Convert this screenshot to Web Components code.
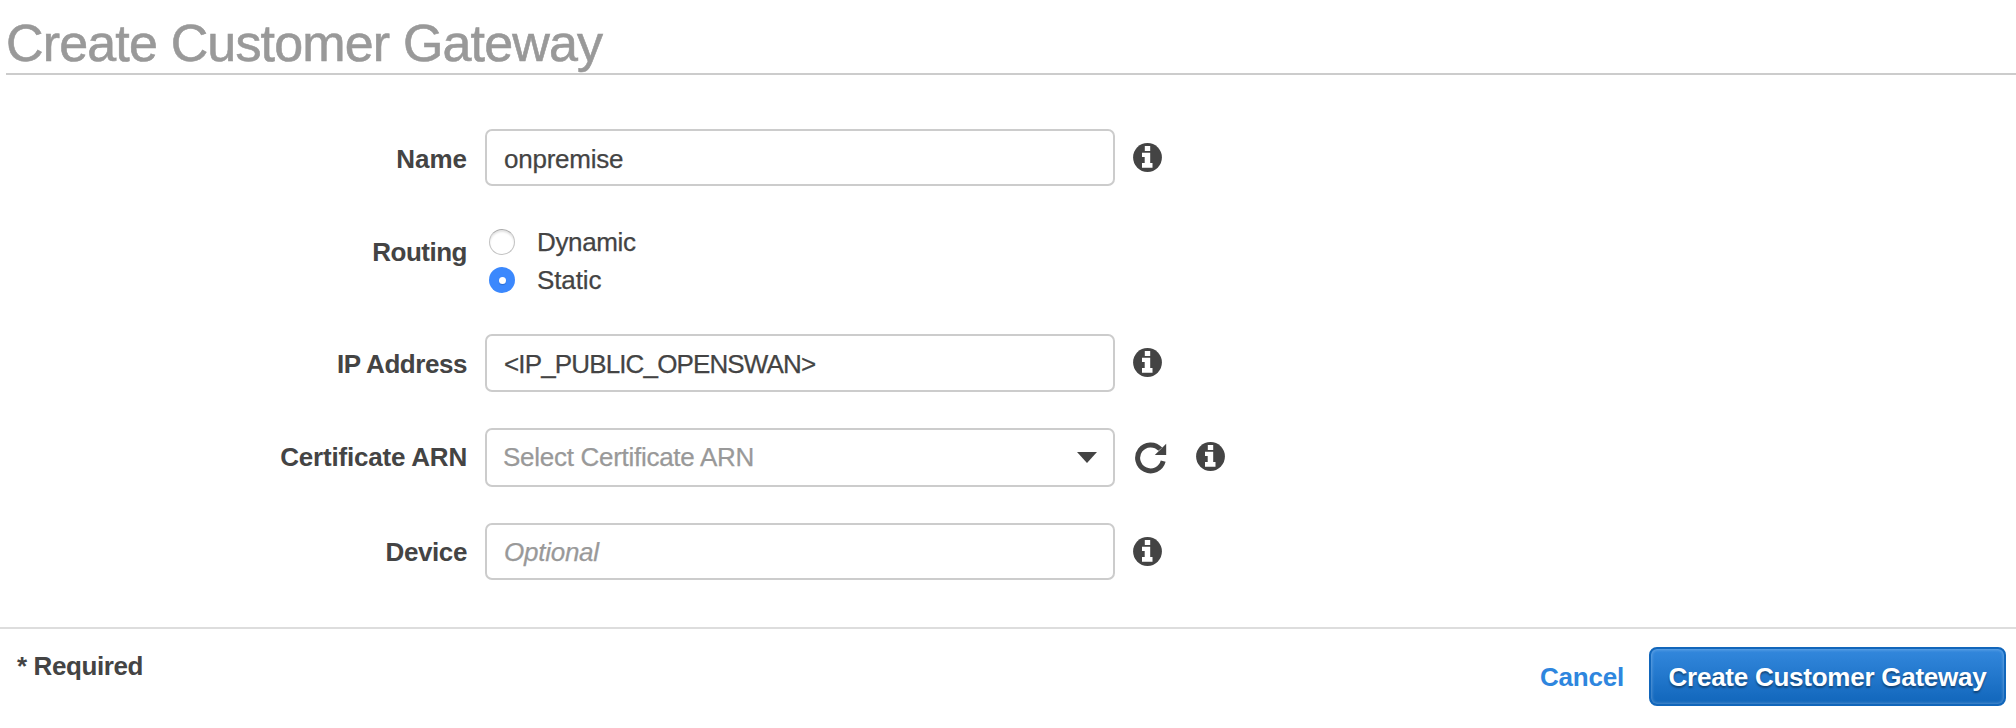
<!DOCTYPE html>
<html lang="en">
<head>
<meta charset="utf-8">
<title>Create Customer Gateway</title>
<style>
html, body { margin: 0; background: #fff; }
body { font-family: "Liberation Sans", Arial, sans-serif; font-size: 26px; line-height: 30px; color: #444; }
</style>
</head>
<body>
<gateway-page></gateway-page>
<script>
const define = (name, html) => customElements.define(name, class extends HTMLElement {
  constructor() {
    super();
    this.attachShadow({ mode: 'open' }).innerHTML = html;
  }
});

define('page-title', `
<style>
:host { display: block; box-sizing: border-box; height: 75px; margin-left: 6px; border-bottom: 2px solid #ccc; color: #999; }
h1 { margin: 0; padding-top: 13px; font-size: 52px; line-height: 60px; font-weight: 400; letter-spacing: -.84px; white-space: nowrap; -webkit-text-stroke: .6px #999; }
</style>
<h1><slot></slot></h1>`);

define('form-row', `
<style>
:host { display: flex; align-items: center; height: 58px; }
.label { width: 467px; margin-right: 18px; text-align: right; font-weight: 700; white-space: nowrap; padding-top: var(--drop, 2px); box-sizing: border-box; }
</style>
<div class="label"><slot name="label"></slot></div>
<slot></slot>`);

define('text-box', `
<style>
:host { display: flex; align-items: center; box-sizing: border-box; width: 630px; height: 100%; padding: var(--drop, 2px) 18px 0 17px; border: 2px solid #ccc; border-radius: 7px; background: #fff; white-space: nowrap; -webkit-text-stroke: .25px; }
:host([placeholder]) { color: #999; }
:host([optional]) { color: #999; font-style: italic; }
span { flex: 1; }
svg { display: none; width: 20px; height: 11px; fill: #444; margin-right: -2px; }
:host([select]) { padding: 0 18px 0 16px; }
:host([select]) span { margin-top: -2px; }
:host([select]) svg { display: block; }
</style>
<span><slot></slot></span><svg viewBox="0 0 20 11"><path d="M0 0h20L10 11z"/></svg>`);

define('info-icon', `
<style>
:host { display: block; width: 29px; height: 29px; margin-left: 18px; }
svg { display: block; width: 29px; height: 29px; }
</style>
<svg viewBox="0 0 29 29"><circle cx="14.5" cy="14.5" r="14.4" fill="#444"/><path fill="#fff" d="M11.8 3.1h5.4v4.9h-5.4zM9 9.7h8.2v10.4h2.3v4.6H9v-4.6h2.7v-6.2H9z"/></svg>`);

define('refresh-icon', `
<style>
:host { display: block; width: 32px; height: 32px; margin-left: 20px; }
svg { display: block; }
</style>
<svg width="32" height="32" viewBox="0 0 32 32"><path d="M28.2 19.2A13 13 0 1 1 25.3 7.2" fill="none" stroke="#444" stroke-width="5"/><path d="M31.2 1.8V13H19.8z" fill="#444"/></svg>`);

define('radio-option', `
<style>
:host { display: flex; align-items: center; height: 38px; -webkit-text-stroke: .25px; }
i { box-sizing: border-box; width: 26px; height: 26px; margin: 0 22px 0 4px; border-radius: 50%; border: 1.5px solid #c3c3c3; border-top-color: #aaa; background: #fff; box-shadow: inset 0 2px 2px #e4e4e4; display: flex; align-items: center; justify-content: center; }
:host([checked]) i { border: 0; background: #3b88fd; box-shadow: none; }
:host([checked]) i::after { content: ""; width: 7px; height: 7px; border-radius: 50%; background: #fff; box-shadow: 0 1px 1px #2a6cd0; }
</style>
<i></i><slot></slot>`);

define('page-footer', `
<style>
:host { display: flex; justify-content: space-between; align-items: flex-start; border-top: 2px solid #ddd; font-weight: 700; white-space: nowrap; }
.required { padding: 22px 0 0 17px; letter-spacing: -.4px; }
.actions { display: flex; align-items: center; padding: 18px 10px 0 0; }
</style>
<div class="required">* Required</div>
<div class="actions"><slot></slot></div>`);

define('link-button', `
<style>
:host { display: block; margin-right: 25px; color: #2e86de; letter-spacing: -.2px; }
</style>
<slot></slot>`);

define('primary-button', `
<style>
:host { display: flex; align-items: center; justify-content: center; box-sizing: border-box; width: 357px; height: 59px; border: 2px solid #1166bb; border-radius: 8px; background: linear-gradient(#3388dd, #1166bb); box-shadow: inset 0 0 3px 1px rgba(255,255,255,.25); color: #fff; text-shadow: 0 2px 2px rgba(0,0,0,.4); letter-spacing: -.25px; }
</style>
<slot></slot>`);

define('gateway-page', `
<style>
:host { display: block; height: 728px; overflow: hidden; }
form { display: block; margin: 0; padding-top: 54px; height: 498px; }
.name { height: 57px; }
.routing { height: 76px; margin-top: 37px; --drop: 0px; }
.routing [slot] { display: block; margin-top: -18px; }
.ip { height: 58px; margin-top: 35px; }
.cert { height: 59px; margin-top: 36px; --drop: 0px; }
.cert [slot] { display: block; margin-top: -2px; }
.device { height: 57px; margin-top: 36px; --drop: 1px; }
.cert refresh-icon { margin-top: 1px; }
.cert info-icon { margin-left: 29px; margin-top: -2px; }
.ip info-icon { margin-top: -1px; }
</style>
<page-title>Create Customer Gateway</page-title>
<form>
<form-row class="name"><span slot="label">Name</span><text-box style="letter-spacing:-.23px">onpremise</text-box><info-icon></info-icon></form-row>
<form-row class="routing"><span slot="label" style="letter-spacing:-.5px">Routing</span><div><radio-option style="letter-spacing:-.35px">Dynamic</radio-option><radio-option checked style="letter-spacing:-.1px">Static</radio-option></div></form-row>
<form-row class="ip"><span slot="label" style="letter-spacing:-.45px">IP Address</span><text-box style="letter-spacing:-.86px">&lt;IP_PUBLIC_OPENSWAN&gt;</text-box><info-icon></info-icon></form-row>
<form-row class="cert"><span slot="label" style="letter-spacing:-.2px">Certificate ARN</span><text-box select placeholder style="letter-spacing:-.28px">Select Certificate ARN</text-box><refresh-icon></refresh-icon><info-icon></info-icon></form-row>
<form-row class="device"><span slot="label" style="letter-spacing:-.4px">Device</span><text-box optional style="letter-spacing:-.25px">Optional</text-box><info-icon></info-icon></form-row>
</form>
<page-footer><link-button>Cancel</link-button><primary-button>Create Customer Gateway</primary-button></page-footer>`);
</script>
</body>
</html>
